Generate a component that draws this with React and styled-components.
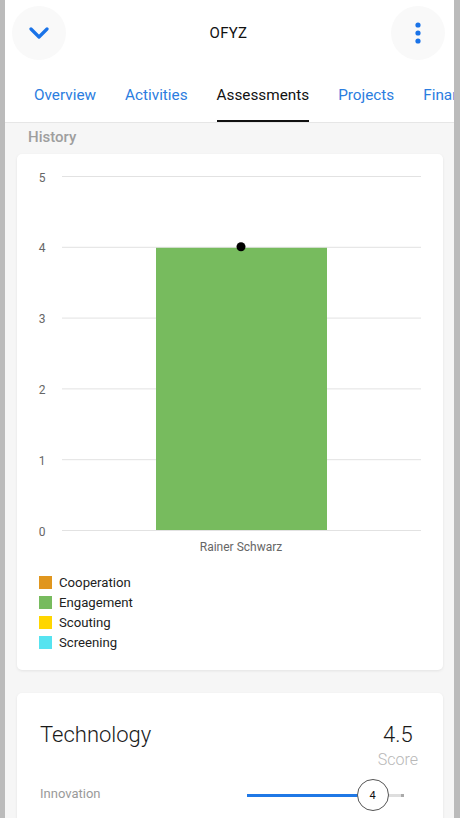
import styled, { createGlobalStyle } from "styled-components";

const GlobalStyle = createGlobalStyle`
  html, body {
    margin: 0;
    padding: 0;
    overflow: hidden;
    background: #bbbbbb;
    font-family: Roboto, "Liberation Sans", sans-serif;
  }
`;

const tabs = ["Overview", "Activities", "Assessments", "Projects", "Financials"];

const legend = [
  { name: "Cooperation", color: "#e0961e" },
  { name: "Engagement", color: "#77bb5e" },
  { name: "Scouting", color: "#ffd600" },
  { name: "Screening", color: "#56e3f0" },
];

const chart = {
  left: 45,
  right: 404,
  top: 22,
  bottom: 376,
  max: 5,
};

function yFor(v) {
  return chart.bottom - ((chart.bottom - chart.top) * v) / chart.max;
}

export default function App() {
  const ticks = [0, 1, 2, 3, 4, 5];
  const value = 4;

  return (
    <>
      <GlobalStyle />
      <Screen>
        <Header>
          <RoundButton aria-label="collapse">
            <svg width="20" height="12" viewBox="0 0 20 12">
              <path
                d="M2 2 L10 10 L18 2"
                fill="none"
                stroke="#1a73e8"
                strokeWidth="3.2"
                strokeLinecap="round"
                strokeLinejoin="round"
              />
            </svg>
          </RoundButton>
          <Title>OFYZ</Title>
          <RoundButton aria-label="more">
            <svg width="6" height="22" viewBox="0 0 6 22">
              <circle cx="3" cy="3" r="2.6" fill="#1a73e8" />
              <circle cx="3" cy="11" r="2.6" fill="#1a73e8" />
              <circle cx="3" cy="19" r="2.6" fill="#1a73e8" />
            </svg>
          </RoundButton>
        </Header>

        <TabBar>
          {tabs.map((t) => (
            <Tab key={t} $active={t === "Assessments"}>
              {t}
            </Tab>
          ))}
        </TabBar>

        <SectionLabel>History</SectionLabel>

        <Card>
          <Chart width="426" height="418" viewBox="0 0 426 418">
            {ticks.map((t) => (
              <g key={t}>
                <line
                  x1={chart.left}
                  x2={chart.right}
                  y1={yFor(t) + 0.5}
                  y2={yFor(t) + 0.5}
                  stroke="#e2e2e2"
                  strokeWidth="1"
                />
                <text
                  x="25"
                  y={yFor(t) + 5.5}
                  textAnchor="middle"
                  fontSize="12"
                  fill="#666"
                >
                  {t}
                </text>
              </g>
            ))}
            <rect
              x="139"
              y={yFor(value) + 1}
              width="171"
              height={chart.bottom - yFor(value) - 1}
              fill="#77bb5e"
            />
            <circle cx="224" cy={yFor(value)} r="4.5" fill="#000" />
            <text x="224" y="397" textAnchor="middle" fontSize="12" fill="#666">
              Rainer Schwarz
            </text>
          </Chart>
          <Legend>
            {legend.map((l) => (
              <LegendItem key={l.name}>
                <Swatch $color={l.color} />
                {l.name}
              </LegendItem>
            ))}
          </Legend>
        </Card>

        <ScoreCard>
          <ScoreHeader>
            <CategoryName>Technology</CategoryName>
            <ScoreBlock>
              <ScoreValue>4.5</ScoreValue>
              <ScoreCaption>Score</ScoreCaption>
            </ScoreBlock>
          </ScoreHeader>
          <CriterionRow>
            <CriterionName>Innovation</CriterionName>
            <Slider>
              <Track>
                <Filled style={{ width: `${(value / 5) * 100}%` }} />
              </Track>
              <Thumb style={{ left: `${(value / 5) * 100}%` }}>{value}</Thumb>
            </Slider>
          </CriterionRow>
        </ScoreCard>
      </Screen>
    </>
  );
}

const Screen = styled.div`
  width: 449px;
  margin-left: 5px;
  min-height: 818px;
  background: #f6f6f6;
  padding-bottom: 40px;
`;

const Header = styled.header`
  height: 66px;
  box-sizing: border-box;
  padding: 0 9px 0 7px;
  display: flex;
  align-items: center;
  justify-content: space-between;
  background: #fff;
`;

const RoundButton = styled.div`
  width: 54px;
  height: 54px;
  border-radius: 50%;
  background: #f9f9f9;
  display: flex;
  align-items: center;
  justify-content: center;
`;

const Title = styled.div`
  font-size: 15px;
  color: #111;
  letter-spacing: 0.3px;
`;

const TabBar = styled.nav`
  display: flex;
  gap: 29px;
  padding-left: 29px;
  background: #fff;
  border-bottom: 1px solid #e6e6e6;
  overflow: hidden;
  white-space: nowrap;
`;

const Tab = styled.div`
  padding: 19px 0 15px;
  line-height: 20px;
  font-size: 15.3px;
  color: ${(p) => (p.$active ? "#111" : "#2b7de0")};
  border-bottom: 2px solid ${(p) => (p.$active ? "#111" : "transparent")};
`;

const SectionLabel = styled.div`
  margin: 4px 0 7px 23px;
  font-size: 15px;
  line-height: 20px;
  font-weight: 500;
  color: #9e9e9e;
`;

const Card = styled.section`
  margin: 0 11px 0 12px;
  background: #fff;
  border-radius: 5px;
  box-shadow: 0 1px 3px rgba(0, 0, 0, 0.08);
  padding-bottom: 18px;
`;

const Chart = styled.svg`
  display: block;
  font-family: Roboto, "Liberation Sans", sans-serif;
`;

const Legend = styled.ul`
  list-style: none;
  margin: 0;
  padding: 0 0 0 22px;
`;

const LegendItem = styled.li`
  display: flex;
  align-items: center;
  gap: 7px;
  height: 20px;
  font-size: 13.2px;
  color: #222;
`;

const Swatch = styled.span`
  width: 13px;
  height: 13px;
  background: ${(p) => p.$color};
`;

const ScoreCard = styled(Card)`
  margin-top: 23px;
  padding: 27px 25px 30px 23px;
`;

const ScoreHeader = styled.div`
  display: flex;
  justify-content: space-between;
  align-items: flex-start;
`;

const CategoryName = styled.h2`
  margin: 0;
  font-size: 22px;
  line-height: 30px;
  font-weight: 300;
  color: #1a1a1a;
`;

const ScoreBlock = styled.div`
  display: flex;
  flex-direction: column;
  align-items: center;
`;

const ScoreValue = styled.div`
  font-size: 22px;
  line-height: 30px;
  font-weight: 300;
  color: #1a1a1a;
`;

const ScoreCaption = styled.div`
  font-size: 16px;
  line-height: 20px;
  font-weight: 300;
  color: #b8b8b8;
`;

const CriterionRow = styled.div`
  margin-top: 8px;
  display: flex;
  align-items: center;
  justify-content: space-between;
  height: 34px;
`;

const CriterionName = styled.div`
  font-size: 13px;
  color: #9a9a9a;
  margin-top: -4px;
`;

const Slider = styled.div`
  position: relative;
  width: 157px;
  height: 34px;
  margin-right: 14px;
  display: flex;
  align-items: center;
`;

const Track = styled.div`
  position: relative;
  width: 100%;
  height: 3px;
  background: #dedede;
  &::after {
    content: "";
    position: absolute;
    right: 0;
    top: 0;
    width: 3px;
    height: 3px;
    background: #aaa;
  }
`;

const Filled = styled.div`
  height: 100%;
  background: #1f78e6;
`;

const Thumb = styled.div`
  position: absolute;
  top: 1px;
  width: 30px;
  height: 30px;
  margin-left: -16px;
  border-radius: 50%;
  border: 1px solid #555;
  background: #fff;
  display: flex;
  align-items: center;
  justify-content: center;
  font-size: 11px;
  color: #111;
`;
